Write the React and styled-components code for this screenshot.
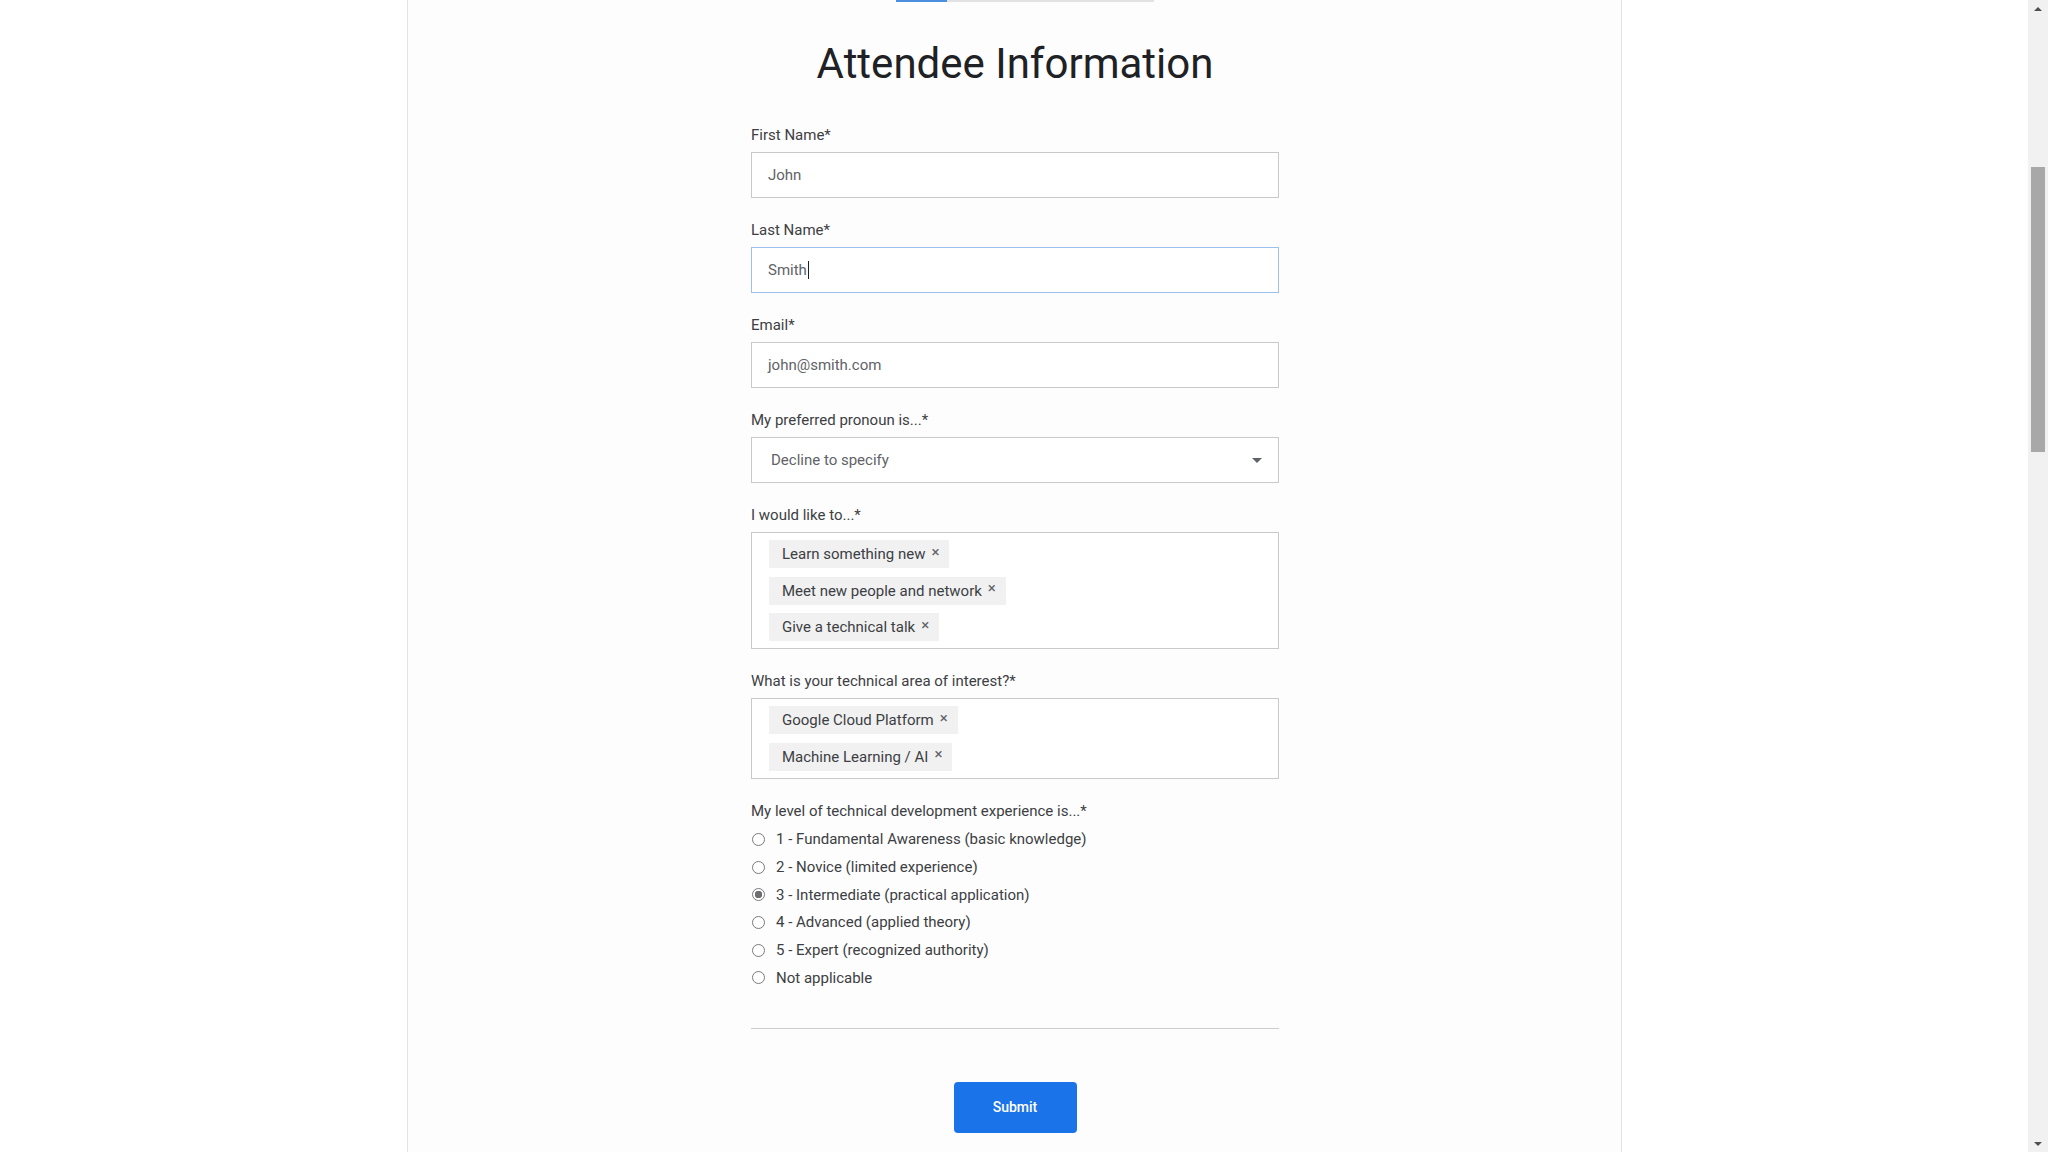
import * as React from "react";
import styled, { createGlobalStyle } from "styled-components";

const interests = ["Learn something new", "Meet new people and network", "Give a technical talk"];
const areas = ["Google Cloud Platform", "Machine Learning / AI"];
const levels = [
  "1 - Fundamental Awareness (basic knowledge)",
  "2 - Novice (limited experience)",
  "3 - Intermediate (practical application)",
  "4 - Advanced (applied theory)",
  "5 - Expert (recognized authority)",
  "Not applicable",
];

const App = () => {
  return (
    <>
      <GlobalStyle />
      <Page>
        <Main>
          <Panel>
            <Progress>
              <ProgressDone />
              <ProgressRest />
            </Progress>
            <Title>Attendee Information</Title>
            <Form>
              <Field>
                <Label>First Name*</Label>
                <TextBox>John</TextBox>
              </Field>
              <Field>
                <Label>Last Name*</Label>
                <TextBox $focused>
                  Smith
                  <Caret />
                </TextBox>
              </Field>
              <Field>
                <Label>Email*</Label>
                <TextBox>john@smith.com</TextBox>
              </Field>
              <Field>
                <Label>My preferred pronoun is...*</Label>
                <SelectBox>
                  Decline to specify
                  <SelectArrow />
                </SelectBox>
              </Field>
              <Field>
                <Label>I would like to...*</Label>
                <ChipBox>
                  {interests.map((item) => (
                    <Chip key={item}>
                      {item}
                      <ChipClose>×</ChipClose>
                    </Chip>
                  ))}
                </ChipBox>
              </Field>
              <Field>
                <Label>What is your technical area of interest?*</Label>
                <ChipBox>
                  {areas.map((item) => (
                    <Chip key={item}>
                      {item}
                      <ChipClose>×</ChipClose>
                    </Chip>
                  ))}
                </ChipBox>
              </Field>
              <RadioGroup>
                <GroupLabel>My level of technical development experience is...*</GroupLabel>
                {levels.map((level, i) => (
                  <RadioRow key={level}>
                    <RadioDot $checked={i === 2} />
                    {level}
                  </RadioRow>
                ))}
              </RadioGroup>
              <Divider />
              <SubmitButton type="button">Submit</SubmitButton>
            </Form>
          </Panel>
        </Main>
        <Scrollbar>
          <ScrollArrow />
          <ScrollThumb />
          <ScrollArrow $down />
        </Scrollbar>
      </Page>
    </>
  );
};

export default App;

const GlobalStyle = createGlobalStyle`
  html, body {
    margin: 0;
    padding: 0;
    background: #ffffff;
    font-family: Roboto, "Liberation Sans", Arial, sans-serif;
  }
  * {
    box-sizing: border-box;
  }
`;

const Page = styled.div`
  display: flex;
  width: 100%;
  height: 1152px;
  overflow: hidden;
`;

const Main = styled.div`
  flex: 1;
  display: flex;
  justify-content: center;
`;

const Panel = styled.div`
  width: 1215px;
  height: 100%;
  display: flex;
  flex-direction: column;
  align-items: center;
  border-left: 1px solid #e4e4e6;
  border-right: 1px solid #e4e4e6;
  background: #fdfdfd;
`;

const Progress = styled.div`
  align-self: flex-start;
  margin-left: 488px;
  display: flex;
  height: 2px;
`;

const ProgressDone = styled.div`
  width: 51px;
  background: #4a8fe0;
`;

const ProgressRest = styled.div`
  width: 207px;
  background: #e2e2e4;
`;

const Title = styled.h1`
  margin: 36px 0 0 2px;
  font-size: 42px;
  line-height: 52px;
  font-weight: 400;
  color: #202124;
`;

const Form = styled.div`
  width: 528px;
  margin: 35px 0 0 2px;
  display: flex;
  flex-direction: column;
`;

const Field = styled.div`
  display: flex;
  flex-direction: column;
  margin-bottom: 22px;
`;

const Label = styled.div`
  font-size: 15px;
  line-height: 20px;
  color: #3c4043;
  margin-bottom: 7px;
`;

const TextBox = styled.div`
  height: 46px;
  display: flex;
  align-items: center;
  padding: 0 16px;
  border: 1px solid ${(p) => (p.$focused ? "#9cc1ee" : "#c9c9cb")};
  background: #ffffff;
  font-size: 15px;
  color: #5f6368;
`;

const Caret = styled.span`
  width: 1px;
  height: 18px;
  margin-left: 1px;
  background: #202124;
`;

const SelectBox = styled(TextBox)`
  justify-content: space-between;
  padding: 0 16px 0 19px;
`;

const SelectArrow = styled.span`
  width: 0;
  height: 0;
  border-left: 5px solid transparent;
  border-right: 5px solid transparent;
  border-top: 5px solid #5f6368;
`;

const ChipBox = styled.div`
  display: flex;
  flex-direction: column;
  align-items: flex-start;
  gap: 8.5px;
  padding: 7px 17px;
  border: 1px solid #c9c9cb;
  background: #ffffff;
`;

const Chip = styled.div`
  height: 28px;
  display: flex;
  align-items: center;
  gap: 6px;
  padding: 0 10px 0 13px;
  background: #f1f1f2;
  font-size: 15px;
  color: #3c4043;
`;

const ChipClose = styled.span`
  font-size: 15px;
  line-height: 14px;
  color: #5f6368;
  margin-top: -5px;
`;

const RadioGroup = styled.div`
  display: flex;
  flex-direction: column;
`;

const GroupLabel = styled(Label)`
  margin-bottom: 5px;
`;

const RadioRow = styled.div`
  height: 27.7px;
  display: flex;
  align-items: center;
  gap: 11px;
  font-size: 15px;
  color: #3c4043;
`;

const RadioDot = styled.span`
  width: 13px;
  height: 13px;
  margin-left: 1px;
  border-radius: 50%;
  border: 1px solid #7a7a7c;
  background: ${(p) => (p.$checked ? "radial-gradient(circle, #6f6f71 0 3.5px, #ffffff 4px)" : "#ffffff")};
`;

const Divider = styled.hr`
  width: 100%;
  margin: 36px 0 0;
  border: none;
  border-top: 1px solid #cdcdcf;
`;

const SubmitButton = styled.button`
  align-self: center;
  margin-top: 53px;
  width: 123px;
  height: 51px;
  border: none;
  border-radius: 4px;
  background: #1a73e8;
  color: #ffffff;
  font-family: Roboto, "Liberation Sans", Arial, sans-serif;
  font-size: 14px;
  font-weight: 500;
`;

const Scrollbar = styled.div`
  width: 20px;
  height: 100%;
  display: flex;
  flex-direction: column;
  align-items: center;
  background: #f1f1f1;
`;

const ScrollArrow = styled.div`
  height: 17px;
  width: 100%;
  display: flex;
  align-items: center;
  justify-content: center;
  margin-top: ${(p) => (p.$down ? "auto" : "0")};

  &::after {
    content: "";
    width: 0;
    height: 0;
    border-left: 4px solid transparent;
    border-right: 4px solid transparent;
    ${(p) => (p.$down ? "border-top: 4px solid #505050;" : "border-bottom: 4px solid #505050;")}
  }
`;

const ScrollThumb = styled.div`
  width: 14px;
  height: 285px;
  margin-top: 150px;
  background: #a8a8a8;
`;
